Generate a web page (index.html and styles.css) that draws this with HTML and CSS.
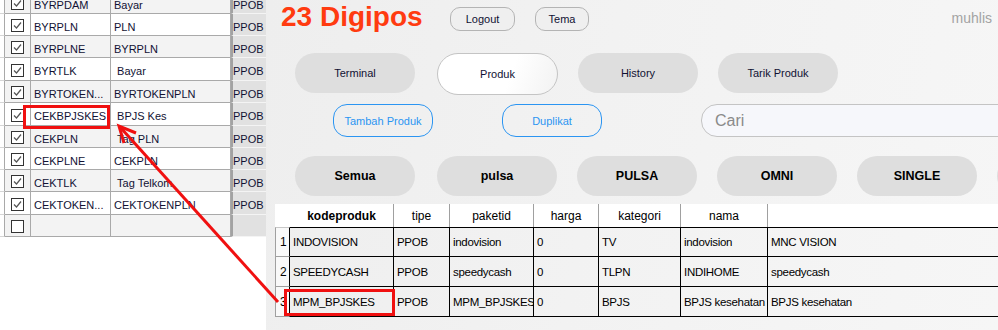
FILE: index.html
```html
<!DOCTYPE html>
<html>
<head>
<meta charset="utf-8">
<title>23 Digipos</title>
<link rel="stylesheet" href="styles.css">
</head>
<body>
<div class="app">
  <div class="left">
    <table class="grid">
      <tr class="alt"><td class="rh"></td><td class="cb"><svg class="chk" width="13" height="13" viewBox="0 0 13 13"><rect x="0.5" y="0.5" width="12" height="12" fill="#fff" stroke="#333"/><polyline points="3,6.5 5.5,9 10,3.5" fill="none" stroke="#555" stroke-width="1.2"/></svg></td><td class="code">BYRPDAM</td><td class="name">Bayar</td><td class="tp">PPOB</td></tr>
      <tr><td class="rh"></td><td class="cb"><svg class="chk" width="13" height="13" viewBox="0 0 13 13"><rect x="0.5" y="0.5" width="12" height="12" fill="#fff" stroke="#333"/><polyline points="3,6.5 5.5,9 10,3.5" fill="none" stroke="#555" stroke-width="1.2"/></svg></td><td class="code">BYRPLN</td><td class="name">PLN</td><td class="tp">PPOB</td></tr>
      <tr class="alt"><td class="rh"></td><td class="cb"><svg class="chk" width="13" height="13" viewBox="0 0 13 13"><rect x="0.5" y="0.5" width="12" height="12" fill="#fff" stroke="#333"/><polyline points="3,6.5 5.5,9 10,3.5" fill="none" stroke="#555" stroke-width="1.2"/></svg></td><td class="code">BYRPLNE</td><td class="name">BYRPLN</td><td class="tp">PPOB</td></tr>
      <tr class="t"><td class="rh"></td><td class="cb"><svg class="chk" width="13" height="13" viewBox="0 0 13 13"><rect x="0.5" y="0.5" width="12" height="12" fill="#fff" stroke="#333"/><polyline points="3,6.5 5.5,9 10,3.5" fill="none" stroke="#555" stroke-width="1.2"/></svg></td><td class="code">BYRTLK</td><td class="name">&nbsp;Bayar</td><td class="tp">PPOB</td></tr>
      <tr class="alt"><td class="rh"></td><td class="cb"><svg class="chk" width="13" height="13" viewBox="0 0 13 13"><rect x="0.5" y="0.5" width="12" height="12" fill="#fff" stroke="#333"/><polyline points="3,6.5 5.5,9 10,3.5" fill="none" stroke="#555" stroke-width="1.2"/></svg></td><td class="code">BYRTOKEN...</td><td class="name">BYRTOKENPLN</td><td class="tp">PPOB</td></tr>
      <tr class="t"><td class="rh"></td><td class="cb"><svg class="chk" width="13" height="13" viewBox="0 0 13 13"><rect x="0.5" y="0.5" width="12" height="12" fill="#fff" stroke="#333"/><polyline points="3,6.5 5.5,9 10,3.5" fill="none" stroke="#555" stroke-width="1.2"/></svg></td><td class="code">CEKBPJSKES</td><td class="name">&nbsp;BPJS Kes</td><td class="tp">PPOB</td></tr>
      <tr class="alt"><td class="rh"></td><td class="cb"><svg class="chk" width="13" height="13" viewBox="0 0 13 13"><rect x="0.5" y="0.5" width="12" height="12" fill="#fff" stroke="#333"/><polyline points="3,6.5 5.5,9 10,3.5" fill="none" stroke="#555" stroke-width="1.2"/></svg></td><td class="code">CEKPLN</td><td class="name">&nbsp;Tag PLN</td><td class="tp">PPOB</td></tr>
      <tr><td class="rh"></td><td class="cb"><svg class="chk" width="13" height="13" viewBox="0 0 13 13"><rect x="0.5" y="0.5" width="12" height="12" fill="#fff" stroke="#333"/><polyline points="3,6.5 5.5,9 10,3.5" fill="none" stroke="#555" stroke-width="1.2"/></svg></td><td class="code">CEKPLNE</td><td class="name">CEKPLN</td><td class="tp">PPOB</td></tr>
      <tr class="alt"><td class="rh"></td><td class="cb"><svg class="chk" width="13" height="13" viewBox="0 0 13 13"><rect x="0.5" y="0.5" width="12" height="12" fill="#fff" stroke="#333"/><polyline points="3,6.5 5.5,9 10,3.5" fill="none" stroke="#555" stroke-width="1.2"/></svg></td><td class="code">CEKTLK</td><td class="name">&nbsp;Tag Telkom</td><td class="tp">PPOB</td></tr>
      <tr class="t"><td class="rh"></td><td class="cb"><svg class="chk" width="13" height="13" viewBox="0 0 13 13"><rect x="0.5" y="0.5" width="12" height="12" fill="#fff" stroke="#333"/><polyline points="3,6.5 5.5,9 10,3.5" fill="none" stroke="#555" stroke-width="1.2"/></svg></td><td class="code">CEKTOKEN...</td><td class="name">CEKTOKENPLN</td><td class="tp">PPOB</td></tr>
      <tr class="alt"><td class="rh"></td><td class="cb"><svg class="chk" width="13" height="13" viewBox="0 0 13 13"><rect x="0.5" y="0.5" width="12" height="12" fill="#fff" stroke="#333"/></svg></td><td class="code"></td><td class="name"></td><td class="tp"></td></tr>
    </table>
  </div>

  <div class="panel">
    <div class="top">
      <div class="brand">23 Digipos</div>
      <button class="small-btn logout">Logout</button>
      <button class="small-btn tema">Tema</button>
      <div class="user">muhlis</div>
    </div>

    <div class="nav">
      <button class="pill first">Terminal</button>
      <button class="pill active">Produk</button>
      <button class="pill">History</button>
      <button class="pill">Tarik Produk</button>
    </div>

    <div class="actions">
      <button class="outline-btn">Tambah Produk</button>
      <button class="outline-btn dup">Duplikat</button>
      <input class="search" type="text" placeholder="Cari">
    </div>

    <div class="cats">
      <button class="pill cat first">Semua</button>
      <button class="pill cat">pulsa</button>
      <button class="pill cat">PULSA</button>
      <button class="pill cat">OMNI</button>
      <button class="pill cat">SINGLE</button>
      <button class="pill cat" aria-label="more"></button>
    </div>

    <table class="data">
      <tr class="head">
        <th class="corner"></th>
        <th class="c1 bold">kodeproduk</th>
        <th class="c2">tipe</th>
        <th class="c3">paketid</th>
        <th class="c4">harga</th>
        <th class="c5">kategori</th>
        <th class="c6">nama</th>
        <th class="c7"></th>
      </tr>
      <tr class="row first-row">
        <td class="num">1</td><td>INDOVISION</td><td>PPOB</td><td>indovision</td><td>0</td><td>TV</td><td>indovision</td><td>MNC VISION</td>
      </tr>
      <tr class="row">
        <td class="num">2</td><td>SPEEDYCASH</td><td>PPOB</td><td>speedycash</td><td>0</td><td>TLPN</td><td>INDIHOME</td><td>speedycash</td>
      </tr>
      <tr class="row">
        <td class="num">3</td><td>MPM_BPJSKES</td><td>PPOB</td><td>MPM_BPJSKES</td><td>0</td><td>BPJS</td><td>BPJS kesehatan</td><td>BPJS kesehatan</td>
      </tr>
    </table>
  </div>

  <svg class="annot" width="998" height="330" viewBox="0 0 998 330">
    <rect x="24.5" y="106.5" width="84" height="21" fill="none" stroke="#f01010" stroke-width="3"/>
    <rect x="285.5" y="290.5" width="108" height="24" fill="none" stroke="#f01010" stroke-width="3"/>
    <line x1="120" y1="127" x2="278" y2="302" stroke="#f01010" stroke-width="3"/>
    <polyline points="136,133 119,126 124,143" fill="none" stroke="#f01010" stroke-width="3" stroke-linejoin="miter"/>
  </svg>
</div>
</body>
</html>
```

FILE: styles.css
```css
html, body {
  margin: 0;
  padding: 0;
}

body {
  width: 998px;
  height: 330px;
  overflow: hidden;
  background: #ffffff;
  font-family: "Liberation Sans", Arial, sans-serif;
}

.app {
  position: relative;
  display: flex;
  width: 998px;
  height: 330px;
}

/* ---------- left grid ---------- */
.left {
  flex: none;
  width: 266px;
  background: #ffffff;
}

.grid {
  border-collapse: separate;
  border-spacing: 0;
  table-layout: fixed;
  width: 266px;
  margin-top: -8px;
  font-size: 11px;
  color: #111133;
}

.grid td {
  box-sizing: border-box;
  height: 22px;
  padding: 5px 0 0 3px;
  border-right: 1px solid #a9a9a9;
  border-bottom: 1px solid #a9a9a9;
  line-height: 13px;
  vertical-align: middle;
  white-space: nowrap;
  overflow: hidden;
  background: #ffffff;
}

.grid tr.t td {
  height: 23px;
}

.grid tr.alt td {
  background: #f3f3f3;
}

.grid td.rh {
  width: 5px;
  padding: 0;
  background: #ffffff;
  border-bottom-color: #d6d6d6;
}

.grid tr.alt td.rh {
  background: #ffffff;
}

.grid td.cb {
  width: 26px;
  padding: 2px 0 0 0;
  text-align: center;
}

.chk {
  display: block;
  margin: 0 auto;
}

.grid td.code {
  width: 80px;
}

.grid td.name {
  width: 120px;
}

.grid td.tp,
.grid tr.alt td.tp {
  width: 35px;
  padding-left: 0;
  border-right: none;
  border-left: 2px solid #a2a2a2;
  border-bottom: 1px solid #f4f4f4;
  background: #e1e1e1;
}

/* ---------- right panel ---------- */
.panel {
  flex: 1;
  min-width: 0;
  overflow: hidden;
  display: flex;
  flex-direction: column;
  padding-left: 9px;
  background: linear-gradient(100deg, #eeeeee 0%, #f2f2f2 45%, #f6f6f6 100%);
}

.top {
  display: flex;
  align-items: flex-start;
  height: 34px;
  padding-left: 6px;
}

.brand {
  flex: none;
  width: 169px;
  font-size: 28px;
  line-height: 34px;
  font-weight: bold;
  color: #ff3b10;
  white-space: nowrap;
}

.small-btn {
  flex: none;
  box-sizing: border-box;
  height: 24px;
  margin-top: 7px;
  padding: 0;
  border: 1px solid #b4b4b4;
  border-radius: 10px;
  background: #efefef;
  font-family: "Liberation Sans", Arial, sans-serif;
  font-size: 11px;
  color: #111133;
}

.logout {
  width: 65px;
}

.tema {
  width: 54px;
  margin-left: 20px;
}

.user {
  margin-left: auto;
  margin-top: 10px;
  padding-right: 6px;
  font-size: 14px;
  line-height: 16px;
  color: #a3a3a3;
}

.nav,
.cats {
  display: flex;
  align-items: flex-start;
  gap: 20px;
  padding-left: 20px;
}

.nav {
  margin-top: 19px;
  height: 42px;
}

.pill {
  flex: none;
  box-sizing: border-box;
  width: 120px;
  height: 40px;
  padding: 0;
  border: none;
  border-radius: 20px;
  background: #dedede;
  font-family: "Liberation Sans", Arial, sans-serif;
  font-size: 11px;
  color: #111133;
}

.pill.first {
  margin-right: 2px;
}

.pill.active {
  width: 121px;
  height: 42px;
  border: 1px solid #c4c4c4;
  border-radius: 21px;
  background: linear-gradient(110deg, #ffffff 0%, #ffffff 60%, #f2f2f2 100%);
}

.actions {
  display: flex;
  align-items: flex-start;
  margin-top: 9px;
  height: 33px;
  padding-left: 58px;
}

.outline-btn {
  flex: none;
  box-sizing: border-box;
  width: 100px;
  height: 33px;
  padding: 0;
  border: 1px solid #2b95f2;
  border-radius: 14px;
  background: transparent;
  font-family: "Liberation Sans", Arial, sans-serif;
  font-size: 11px;
  color: #2b95f2;
}

.outline-btn.dup {
  margin-left: 69px;
}

.search {
  flex: none;
  box-sizing: border-box;
  width: 330px;
  height: 33px;
  margin-left: 99px;
  padding: 0 0 0 13px;
  border: 1px solid #c4c4c4;
  border-radius: 16px;
  background: #f6f7fb;
  font-family: "Liberation Sans", Arial, sans-serif;
  font-size: 16px;
  color: #333333;
  outline: none;
}

.search::placeholder {
  color: #8a8a8a;
}

.cats {
  margin-top: 19px;
  height: 40px;
}

.pill.cat {
  font-size: 12.5px;
  font-weight: bold;
  color: #000000;
}

/* ---------- data table ---------- */
.data {
  flex: none;
  margin-top: 8px;
  width: 740px;
  border-collapse: separate;
  border-spacing: 0;
  table-layout: fixed;
  font-family: "Liberation Sans", Arial, sans-serif;
  color: #000000;
}

.data th {
  box-sizing: border-box;
  height: 23px;
  padding: 0;
  background: #ffffff;
  border-right: 1px solid #a0a0a0;
  font-size: 12px;
  font-weight: normal;
  text-align: center;
  vertical-align: middle;
  white-space: nowrap;
}

.data th.bold {
  font-weight: bold;
}

.data th.corner {
  width: 15px;
  border-right: none;
}

.data th.c1 { width: 104px; }
.data th.c2 { width: 56px; }
.data th.c3 { width: 84px; }
.data th.c4 { width: 65px; }
.data th.c5 { width: 82px; }
.data th.c6 { width: 87px; }
.data th.c7 { border-right: none; }

.data td {
  box-sizing: border-box;
  height: 30px;
  padding: 0 0 0 3px;
  border-right: 1px solid #000000;
  border-bottom: 1px solid #000000;
  font-size: 11.5px;
  letter-spacing: -0.3px;
  vertical-align: middle;
  white-space: nowrap;
  overflow: hidden;
}

.data tr.first-row td {
  border-top: 1px solid #000000;
}

.data td.num {
  padding-left: 4px;
  background: #f9f9f9;
  border-left: 1px solid #a0a0a0;
  border-bottom: 1px solid #a0a0a0;
  font-size: 12px;
  letter-spacing: 0;
}

.data tr.first-row td.num {
  border-top: 1px solid #c8c8c8;
}

/* ---------- annotation overlay ---------- */
.annot {
  position: absolute;
  top: 0;
  left: 0;
  pointer-events: none;
}
```
